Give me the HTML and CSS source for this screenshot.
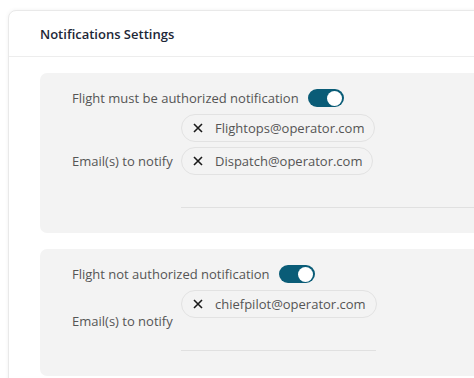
FILE: index.html
```html
<!DOCTYPE html>
<html>
<head>
<meta charset="utf-8">
<link rel="stylesheet" href="styles.css">
</head>
<body>
<div class="card">
  <div class="card-header">Notifications Settings</div>
  <div class="card-body">
    <div class="panel">
      <div class="toggle-row">
        <span class="label">Flight must be authorized notification</span>
        <span class="toggle"><span class="knob"></span></span>
      </div>
      <div class="email-row">
        <span class="label email-label">Email(s) to notify</span>
        <div class="field field-wide">
          <div class="chips">
            <span class="chip"><svg class="x" viewBox="0 0 10 10" width="10" height="10"><path d="M1 1L9 9M9 1L1 9"/></svg>Flightops@operator.com</span>
            <span class="chip"><svg class="x" viewBox="0 0 10 10" width="10" height="10"><path d="M1 1L9 9M9 1L1 9"/></svg>Dispatch@operator.com</span>
          </div>
          <div class="input"></div>
        </div>
      </div>
    </div>
    <div class="panel">
      <div class="toggle-row">
        <span class="label">Flight not authorized notification</span>
        <span class="toggle"><span class="knob"></span></span>
      </div>
      <div class="email-row">
        <span class="label email-label">Email(s) to notify</span>
        <div class="field field-narrow">
          <div class="chips">
            <span class="chip"><svg class="x" viewBox="0 0 10 10" width="10" height="10"><path d="M1 1L9 9M9 1L1 9"/></svg>chiefpilot@operator.com</span>
          </div>
          <div class="input"></div>
        </div>
      </div>
    </div>
  </div>
</div>
</body>
</html>
```

FILE: styles.css
```css
html, body {
  margin: 0;
  padding: 0;
  background: #ffffff;
  overflow: hidden;
}
body {
  font-family: "Open Sans", "Noto Sans", sans-serif;
  font-size: 13px;
  color: #555555;
}
.card {
  margin: 10px 0 0 8px;
  width: 560px;
  background: #fff;
  border: 1px solid #e9e9e9;
  border-radius: 8px;
  box-shadow: 0 0 4px rgba(0,0,0,0.06);
}
.card-header {
  height: 45px;
  display: flex;
  align-items: center;
  padding-left: 31px;
  font-weight: 600;
  color: #1d2737;
  border-bottom: 1px solid #ededed;
}
.card-body {
  padding: 16px 0 24px 31px;
  display: flex;
  flex-direction: column;
  gap: 16px;
}
.panel {
  background: #f3f3f3;
  border-radius: 7px;
  padding: 16px 32px 25px 32px;
}
.toggle-row {
  display: flex;
  align-items: center;
  gap: 9px;
  height: 18px;
}
.label {
  color: #555;
  line-height: 18px;
}
.toggle {
  width: 36px;
  height: 18px;
  border-radius: 9px;
  background: #0a5c77;
  display: flex;
  align-items: center;
  justify-content: flex-end;
  padding: 0 2px;
  box-sizing: border-box;
}
.knob {
  width: 15px;
  height: 15px;
  border-radius: 50%;
  background: #fff;
}
.email-row {
  display: flex;
  align-items: center;
  margin-top: 7px;
}
.email-label {
  width: 109px;
  flex: none;
}
.field {
  display: flex;
  flex-direction: column;
}
.field-wide { width: 340px; }
.field-narrow { width: 195px; }
.chips {
  display: flex;
  flex-direction: column;
  align-items: flex-start;
  gap: 5px;
}
.chip {
  display: flex;
  align-items: center;
  gap: 12px;
  height: 26px;
  padding: 0 10px 0 11px;
  border: 1px solid #e2e2e2;
  border-radius: 14px;
  color: #555;
}
.x {
  stroke: #1a1a1a;
  stroke-width: 1.6;
  fill: none;
}
.input {
  height: 32px;
  border-bottom: 1px solid #e0e0e0;
}
```
